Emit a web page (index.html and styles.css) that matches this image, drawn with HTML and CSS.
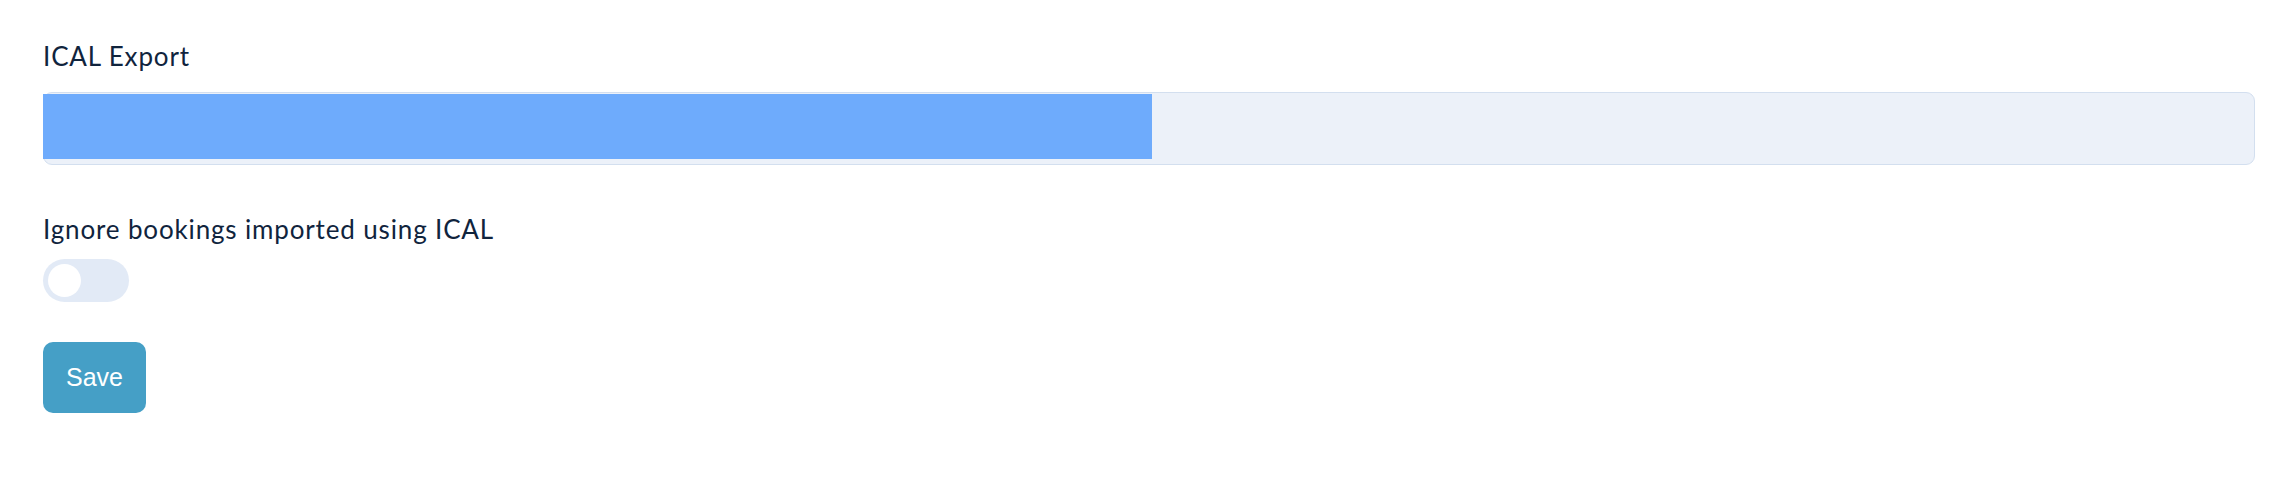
FILE: index.html
```html
<!DOCTYPE html>
<html lang="en">
<head>
<meta charset="utf-8">
<title>ICAL settings</title>
<link rel="stylesheet" href="styles.css">
</head>
<body>
<div class="form">
  <div class="field field-export">
    <label class="label">ICAL Export</label>
    <div class="progress"><div class="progress-bar" style="width:50.2%"></div></div>
  </div>
  <div class="field field-ignore">
    <label class="label">Ignore bookings imported using ICAL</label>
    <span class="toggle"><span class="knob"></span></span>
  </div>
  <button class="btn" type="button">Save</button>
</div>
</body>
</html>
```

FILE: styles.css
```css
html, body {
  margin: 0;
  padding: 0;
  background: #ffffff;
}
body {
  font-family: Lato, "Open Sans", sans-serif;
  color: #10243d;
}
.form {
  padding: 41px 41px 40px 43px;
  display: flex;
  flex-direction: column;
  align-items: flex-start;
}
.field {
  display: flex;
  flex-direction: column;
  align-items: flex-start;
  align-self: stretch;
}
.label {
  font-size: 26px;
  line-height: 30px;
  letter-spacing: 0.85px;
  font-weight: 400;
}
.field-export .label {
  margin-bottom: 21px;
}
.progress {
  align-self: stretch;
  box-sizing: border-box;
  height: 73px;
  background: #ecf1f9;
  border: 1px solid #d3dfef;
  border-radius: 9px;
  padding: 1px 0 5px 0;
}
.progress-bar {
  height: 100%;
  background: #6eabfc;
  margin-left: -1px;
}
.field-ignore {
  margin-top: 49px;
}
.field-ignore .label {
  margin-bottom: 15px;
}
.toggle {
  display: flex;
  align-items: center;
  box-sizing: border-box;
  width: 86px;
  height: 43px;
  padding: 0 5px;
  border-radius: 22px;
  background: #e2eaf6;
}
.knob {
  width: 33px;
  height: 33px;
  border-radius: 50%;
  background: #ffffff;
}
.btn {
  margin-top: 40px;
  width: 103px;
  height: 71px;
  border: none;
  border-radius: 10px;
  background: #459fc6;
  color: #ffffff;
  font-family: "Liberation Sans", Arial, sans-serif;
  font-size: 25px;
  font-weight: 400;
  padding: 0;
  cursor: pointer;
}
```
